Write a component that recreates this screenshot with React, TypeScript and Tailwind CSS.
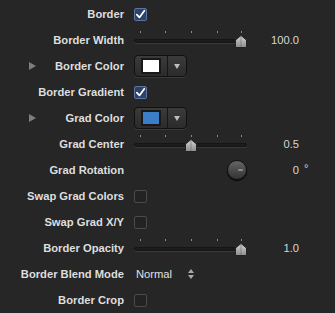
import React from "react";

const font = { fontFamily: '"Liberation Sans", Arial, sans-serif' };

function Check({ on }: { on?: boolean }) {
  if (on)
    return (
      <span className="flex h-[13px] w-[13px] items-center justify-center rounded-[2px] border border-[#5d74a0] bg-[#2c4268]">
        <svg viewBox="0 0 12 12" className="h-[11px] w-[11px]" fill="none">
          <path d="M2 6.2 L4.8 9.2 L10.2 1.8" stroke="#ffffff" strokeWidth="1.9" strokeLinecap="round" strokeLinejoin="round" />
        </svg>
      </span>
    );
  return <span className="block h-[13px] w-[13px] rounded-[2px] border border-[#4a4a4a] bg-[#232323]" />;
}

function Slider({ pct }: { pct: number }) {
  const ticks = [6, 31, 57, 83, 107];
  const center = 6 + (101 * pct) / 100;
  return (
    <div className="relative h-[26px] w-[113px]">
      {ticks.map((t) => (
        <span key={t} className="absolute top-[4px] h-[2px] w-[1px] bg-[#8a8a8a]" style={{ left: t }} />
      ))}
      <div className="absolute left-0 right-0 top-[12px] h-[4px] rounded-full border border-[#151515] bg-[#1c1c1c] shadow-[0_1px_0_#3a3a3a]" />
      <svg
        viewBox="0 0 12 13"
        className="absolute top-[8px] h-[13px] w-[12px]"
        style={{ left: center - 6 }}
      >
        <defs>
          <linearGradient id={`th${pct}`} x1="0" y1="0" x2="0" y2="1">
            <stop offset="0" stopColor="#d4d4d4" />
            <stop offset="1" stopColor="#8c8c8c" />
          </linearGradient>
        </defs>
        <path d="M6 0.5 L11.5 5 L11.5 12.5 L0.5 12.5 L0.5 5 Z" fill={`url(#th${pct})`} stroke="#222" strokeWidth="1" />
        <path d="M6 1.5 L6 12" stroke="#6a6a6a" strokeWidth="0.6" />
      </svg>
    </div>
  );
}

function Well({ color }: { color: string }) {
  return (
    <div className="flex h-[22px] w-[53px] items-stretch rounded-[4px] border border-[#111] bg-gradient-to-b from-[#3b3b3b] to-[#2b2b2b] shadow-[0_1px_0_#3a3a3a]">
      <div className="flex w-[33px] items-center justify-center border-r border-[#161616]">
        <span className="block h-[16px] w-[20px] border-2 border-[#181818]" style={{ background: color }} />
      </div>
      <div className="flex flex-1 items-center justify-center">
        <span className="block h-0 w-0 border-x-[3.5px] border-t-[5px] border-x-transparent border-t-[#bdbdbd]" />
      </div>
    </div>
  );
}

function Row({ label, disclose, children }: { label: string; disclose?: boolean; children?: React.ReactNode }) {
  return (
    <div className="flex h-[26px] items-center">
      <div className="flex w-[124px] items-center">
        {disclose ? (
          <span className="ml-[29px] block h-0 w-0 border-y-[4.5px] border-l-[7px] border-y-transparent border-l-[#7e7e7e]" />
        ) : null}
        <span className="flex-1 text-right text-[11.2px] font-bold text-[#dedede]">{label}</span>
      </div>
      <div className="ml-[10px] flex items-center">{children}</div>
    </div>
  );
}

function Value({ v }: { v: string }) {
  return <span className="w-[52px] text-right text-[11.2px] text-[#d6d6d6]">{v}</span>;
}

export default function App() {
  return (
    <div className="h-[313px] w-[335px] overflow-hidden bg-[#262626] pt-[1px]" style={font}>
      <Row label="Border">
        <Check on />
      </Row>
      <Row label="Border Width">
        <Slider pct={100} />
        <Value v="100.0" />
      </Row>
      <Row label="Border Color" disclose>
        <Well color="#ffffff" />
      </Row>
      <Row label="Border Gradient">
        <Check on />
      </Row>
      <Row label="Grad Color" disclose>
        <Well color="#3b7dc6" />
      </Row>
      <Row label="Grad Center">
        <Slider pct={50} />
        <Value v="0.5" />
      </Row>
      <Row label="Grad Rotation">
        <div className="flex w-[113px] justify-end">
          <span className="relative block h-[20px] w-[20px] rounded-full border border-[#111] bg-gradient-to-b from-[#656565] to-[#333] shadow-[0_1px_1px_#000]">
            <span className="absolute right-[3px] top-[8px] h-[2px] w-[5px] rounded-full bg-[#8a8a8a]" />
          </span>
        </div>
        <Value v="0" />
        <span className="ml-[5px] -mt-[4px] text-[11px] text-[#d6d6d6]">°</span>
      </Row>
      <Row label="Swap Grad Colors">
        <Check />
      </Row>
      <Row label="Swap Grad X/Y">
        <Check />
      </Row>
      <Row label="Border Opacity">
        <Slider pct={100} />
        <Value v="1.0" />
      </Row>
      <Row label="Border Blend Mode">
        <span className="ml-[2px] text-[11.2px] text-[#e0e0e0]">Normal</span>
        <span className="ml-[16px] flex flex-col items-center gap-[2px]">
          <span className="block h-0 w-0 border-x-[3px] border-b-[4px] border-x-transparent border-b-[#aaa]" />
          <span className="block h-0 w-0 border-x-[3px] border-t-[4px] border-x-transparent border-t-[#aaa]" />
        </span>
      </Row>
      <Row label="Border Crop">
        <Check />
      </Row>
    </div>
  );
}
